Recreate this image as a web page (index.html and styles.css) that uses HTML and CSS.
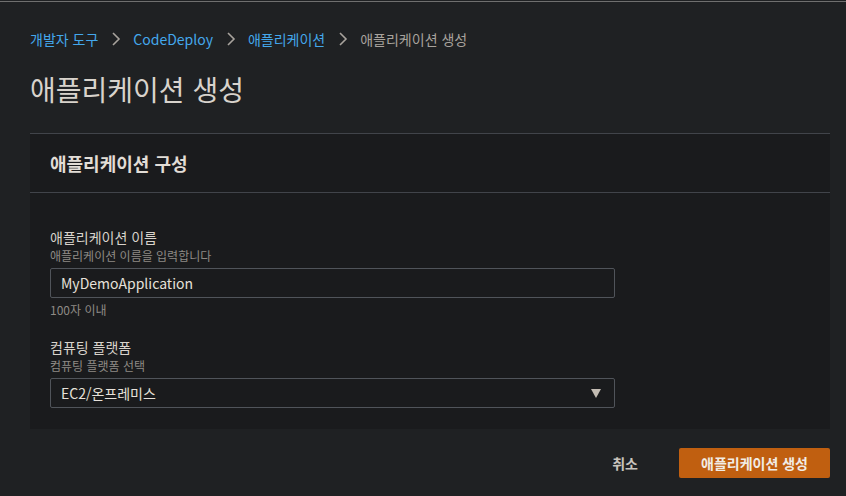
FILE: index.html
```html
<!DOCTYPE html>
<html lang="ko">
<head>
  <meta charset="UTF-8">
  <title>애플리케이션 생성</title>
  <link rel="stylesheet" href="styles.css">
</head>
<body>
  <div class="top-line"></div>

  <div class="page">
    <!-- 브레드크럼 -->
    <nav class="breadcrumb">
      <a href="#" class="crumb-link">개발자 도구</a>
      <svg class="chevron" width="16" height="16" viewBox="0 0 16 16"><polyline points="5,2 11,8 5,14" /></svg>
      <a href="#" class="crumb-link">CodeDeploy</a>
      <svg class="chevron" width="16" height="16" viewBox="0 0 16 16"><polyline points="5,2 11,8 5,14" /></svg>
      <a href="#" class="crumb-link">애플리케이션</a>
      <svg class="chevron" width="16" height="16" viewBox="0 0 16 16"><polyline points="5,2 11,8 5,14" /></svg>
      <span class="crumb-current">애플리케이션 생성</span>
    </nav>

    <h1 class="page-title">애플리케이션 생성</h1>

    <!-- 설정 카드 -->
    <div class="card">
      <div class="card-header">
        <h2>애플리케이션 구성</h2>
      </div>
      <div class="card-body">
        <div class="field">
          <div class="field-label">애플리케이션 이름</div>
          <div class="field-desc">애플리케이션 이름을 입력합니다</div>
          <input type="text" class="text-input" value="MyDemoApplication">
          <div class="field-hint">100자 이내</div>
        </div>

        <div class="field">
          <div class="field-label">컴퓨팅 플랫폼</div>
          <div class="field-desc">컴퓨팅 플랫폼 선택</div>
          <div class="select-box">
            <span>EC2/온프레미스</span>
            <svg class="caret" width="10" height="9" viewBox="0 0 10 9"><polygon points="0,0 10,0 5,9" /></svg>
          </div>
        </div>
      </div>
    </div>

    <div class="actions">
      <button class="btn-cancel">취소</button>
      <button class="btn-primary">애플리케이션 생성</button>
    </div>
  </div>
</body>
</html>
```

FILE: styles.css
```css
body {
  margin: 0;
  background-color: #1f2123;
  font-family: "Noto Sans CJK KR", "Noto Sans", sans-serif;
  color: #d5d0ca;
}

/* 상단 라인 */
.top-line {
  height: 1px;
  margin-top: 1px;
  background-color: #6f6f6f;
}

.page {
  padding: 0 16px 0 30px;
}

.breadcrumb {
  display: flex;
  align-items: center;
  height: 20px;
  margin-top: 27px;
  font-size: 14px;
}

.crumb-link {
  color: #44a8ec;
  text-decoration: none;
}

.crumb-current {
  color: #a8a39d;
}

.chevron {
  margin: 0 9px 0 10px;
  fill: none;
  stroke: #a8a39d;
  stroke-width: 1.6;
}

.page-title {
  margin: 20px 0 0 0;
  font-size: 28px;
  font-weight: 400;
  line-height: 40px;
  color: #d8d3cc;
}

.card {
  margin-top: 24px;
  background-color: #1a1b1d;
  border-top: 1px solid #41444a;
}

.card-header {
  height: 58px;
  display: flex;
  align-items: center;
  padding: 0 20px;
  border-bottom: 1px solid #41444a;
}

.card-header h2 {
  margin: 0;
  font-size: 18px;
  font-weight: 700;
  color: #e2ddd6;
}

.card-body {
  padding: 34px 20px 21px 20px;
}

.field + .field {
  margin-top: 19px;
}

.field-label {
  font-size: 14px;
  line-height: 20px;
  color: #d8d3cc;
}

.field-desc {
  font-size: 12px;
  line-height: 17px;
  color: #8e8a85;
}

.text-input,
.select-box {
  box-sizing: border-box;
  width: 565px;
  height: 30px;
  margin-top: 4px;
  padding: 0 10px;
  background-color: #1a1b1d;
  border: 1px solid #50545a;
  border-radius: 2px;
  font-family: "Noto Sans CJK KR", "Noto Sans", sans-serif;
  font-size: 14px;
  color: #e6e1da;
  outline: none;
}

.select-box {
  display: flex;
  align-items: center;
  justify-content: space-between;
  padding-right: 13px;
}

.caret {
  fill: #c3bcb3;
}

.field-hint {
  margin-top: 3px;
  font-size: 12px;
  line-height: 17px;
  color: #8e8a85;
}

.actions {
  display: flex;
  justify-content: flex-end;
  align-items: center;
  margin-top: 19px;
}

.btn-cancel,
.btn-primary {
  height: 30px;
  font-family: "Noto Sans CJK KR", "Noto Sans", sans-serif;
  font-size: 14px;
  font-weight: 700;
  border: none;
  cursor: pointer;
}

.btn-cancel {
  background: none;
  color: #c9c4bd;
  padding: 0 20px;
  margin-right: 21px;
}

.btn-primary {
  width: 151px;
  background-color: #c05f10;
  color: #f1ece5;
  border-radius: 2px;
}
```
